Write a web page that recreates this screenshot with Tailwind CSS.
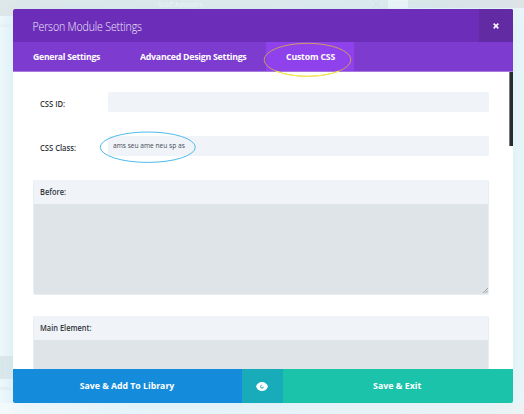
<!DOCTYPE html>
<html lang="en">
<head>
<meta charset="utf-8">
<title>Person Module Settings</title>
<script src="https://cdn.jsdelivr.net/npm/@tailwindcss/browser@4"></script>
</head>
<body class="relative h-[414px] w-[524px] overflow-hidden bg-linear-to-r from-[#f0f9fb] via-[#e4f3f9] via-3% to-[#eaf7f9] font-['Open_Sans','Noto_Sans',sans-serif] whitespace-nowrap">
  <!-- Dimmed page behind the dialog -->
  <div class="absolute inset-x-0 top-0 flex h-4">
    <div class="w-[388px] bg-linear-to-r from-[#dfe7e9] to-[#dfebef] pl-[158px] text-[7px] leading-[9px] text-[#f0f7fa]">Staff Advisors</div>
    <div class="w-5 bg-[#edf6f9]"></div>
    <div class="h-2 flex-1 bg-linear-to-r from-[#dbe7ea] to-[#e0e4e6]"></div>
  </div>
  <svg class="absolute top-[1px] left-[373px] size-[7px]" viewBox="0 0 7 7" fill="none" stroke="#d2dde1" stroke-width=".7"><path d="M0 0 7 7M7 0 0 7"/></svg>
  <div class="absolute top-[21px] left-0 text-[6px] leading-[9px] tracking-[-0.2px] text-[#dfebef]">ules</div>
  <div class="absolute top-[356px] left-0 h-[23px] w-3.5 bg-[#dbe8eb]"></div>
  <div class="absolute top-[384px] left-0 text-[6px] leading-[9px] tracking-[-0.2px] text-[#dce7eb]">ules</div>
  <div class="absolute inset-x-0 top-[403px] h-[11px] bg-linear-to-r from-[#f5fafb] via-[#e8f6fb] via-25% to-[#edf4f6]"></div>

  <main class="absolute top-[9px] left-[12.5px] flex h-[394px] w-[500px] flex-col overflow-hidden rounded-[2px] bg-white shadow-[0_0_24px_rgba(190,225,240,0.35)]">
    <header class="flex h-[33px] shrink-0 items-center justify-between bg-[#6c2eb9]">
      <h1 class="origin-left scale-x-[.865] pt-[2px] pl-[22.5px] text-[12.2px] leading-4 font-light tracking-[-0.16px] text-[#f1e8fb]">Person Module Settings</h1>
      <button class="grid h-full w-[33.5px] place-items-center bg-[#622aa3]" aria-label="Close">
        <svg class="mt-[1px] size-[6px]" viewBox="0 0 7 7" fill="none" stroke="#fff" stroke-width="1.9"><path d="m.8.8 5.4 5.4M6.2.8.8 6.2"/></svg>
      </button>
    </header>
    <nav class="flex h-[30px] shrink-0 border-b border-[#a679dc] bg-[#7e3bd0] text-[9.5px] font-bold text-white">
      <a class="flex w-[107px] items-center pt-[2px] pl-[20px]"><span class="origin-left scale-x-[.91] tracking-[-0.27px]">General Settings</span></a>
      <a class="flex w-[146px] items-center pt-[2px] pl-[20px]"><span class="origin-left scale-x-[.925] tracking-[-0.27px]">Advanced Design Settings</span></a>
      <a class="flex w-[88.5px] items-center bg-[#8f42ec] pt-[2px] pl-[20px]"><span class="origin-left scale-x-[.92] tracking-[-0.2px]">Custom CSS</span></a>
    </nav>
    <section class="flex min-h-0 flex-1 overflow-hidden text-[8px] font-semibold text-[#32373c]">
      <div class="w-[476.5px] pt-[20px] pl-[20px]">
        <div class="flex h-5">
          <label class="w-[75px] pt-[6px] pl-[7.5px] leading-3"><span class="inline-block origin-left scale-x-[.95]">CSS ID:</span></label>
          <div class="flex-1 rounded-[2px] bg-[#f0f3f8]"></div>
        </div>
        <div class="mt-6 flex h-5">
          <label class="w-[75px] pt-[6px] pl-[7.5px] leading-3"><span class="inline-block origin-left scale-x-[.95]">CSS Class:</span></label>
          <div class="flex-1 rounded-[2px] bg-[#f0f3f8] pt-[4px] pl-[5px] text-[7px] leading-3 font-normal text-[#3f4a56]"><span class="inline-block origin-left scale-x-[.945]">ams seu ame neu sp as</span></div>
        </div>
        <div class="mt-6 h-[114.5px] overflow-hidden rounded-[2px] border border-t-0 border-[#eaedf1] bg-[#dfe4e8]">
          <div class="h-6 bg-[#f0f3f8] pt-[6px] pl-[6.5px] leading-3"><span class="inline-block origin-left scale-x-[.93]">Before:</span></div>
          <svg class="mt-[84px] ml-auto size-[5px]" viewBox="0 0 5 5" fill="none" stroke="#7e8489" stroke-width=".7"><path d="M0 5 5 0M2.5 5 5 2.5"/></svg>
        </div>
        <div class="mt-[21.5px] h-[80px] overflow-hidden rounded-[2px] border border-t-0 border-[#eaedf1] bg-[#dfe4e8]">
          <div class="h-6 bg-[#f0f3f8] pt-[6px] pl-[6.5px] leading-3"><span class="inline-block origin-left scale-x-[.93]">Main Element:</span></div>
        </div>
      </div>
      <div class="ml-auto h-[74px] w-[4px] border-l border-[#777b80] bg-[#282c31]"></div>
    </section>
    <footer class="flex h-[34px] shrink-0 text-[9.6px] font-bold text-white">
      <button class="w-[229.5px] bg-[#158cdb]"><span class="inline-block scale-x-[.91]">Save &amp; Add To Library</span></button>
      <button class="grid w-[40.5px] place-items-center bg-[#18abba]" aria-label="Preview">
        <svg class="h-[9px] w-[12px]" viewBox="0 0 12 9"><path fill="#fff" d="M0 4.5Q1.8 0 6 0T12 4.5Q10.2 9 6 9T0 4.5"/><path d="M5.7 3.1A1.5 1.5 0 1 0 7.5 4.8" fill="none" stroke="#18abba" stroke-width="1"/></svg>
      </button>
      <button class="flex-1 bg-[#1bc3aa]"><span class="inline-block scale-x-[.92]">Save &amp; Exit</span></button>
    </footer>
  </main>

  <!-- Annotation rings -->
  <svg class="absolute inset-0 h-[414px] w-[524px]" viewBox="0 0 524 414" fill="none">
    <ellipse cx="307.5" cy="59.8" rx="43.3" ry="16.5" stroke="#e0b03c" stroke-width=".8"/>
    <path d="M276 71.1A43.3 16.5 0 0 0 339 71.1" stroke="#f8ef45"/>
    <ellipse cx="147.8" cy="147.2" rx="47.5" ry="15.2" stroke="#4dbbed" stroke-width="1"/>
  </svg>
</body>
</html>
